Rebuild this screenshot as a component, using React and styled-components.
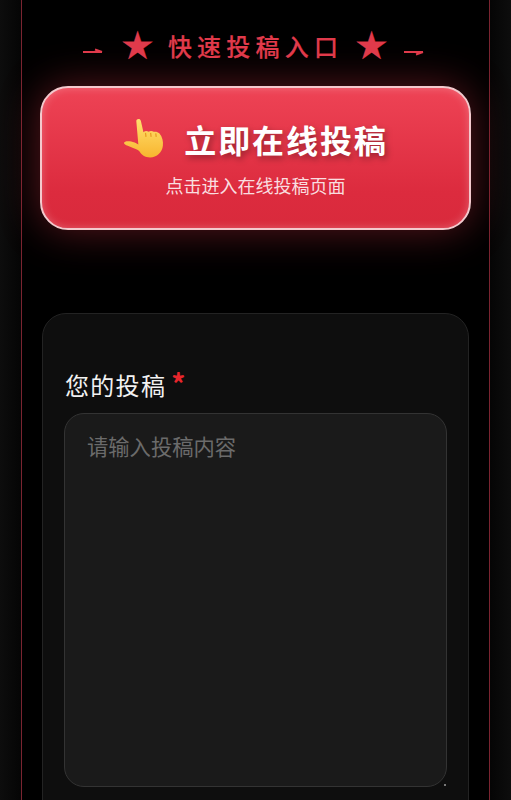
import React from 'react'
import styled, { createGlobalStyle } from 'styled-components';

const GlobalStyle = createGlobalStyle`
html, body {
  margin: 0;
  padding: 0;
  background: #000;
  height: 800px;
  overflow: hidden;
}
body {
  font-family: "Noto Sans CJK SC", "Noto Sans", "Liberation Sans", sans-serif;
}
`;

const Page = styled.div`
width: 511px;
height: 800px;
display: flex;
justify-content: center;
overflow: hidden;
background: linear-gradient(90deg, #0d0d0d 0, #050505 21px, #000 22px, #000 489px, #050505 490px, #0d0d0d 511px);
`;

const Column = styled.div`
width: 469px;
height: 800px;
box-sizing: border-box;
flex-shrink: 0;
background: #000;
border-left: 1px solid #7a2430;
border-right: 1px solid #7a2430;
padding: 30px 18px 0;
`;

const Heading = styled.div`
height: 32px;
padding-right: 4px;
display: flex;
align-items: center;
justify-content: center;
color: #e03a4b;
font-size: 24px;
line-height: 32px;
letter-spacing: 5.2px;
font-weight: 500;
-webkit-text-stroke: 0.15px #e03a4b;
white-space: nowrap;
`;

const Star = styled.span`
font-family: "DejaVu Sans", sans-serif;
font-size: 39px;
font-weight: 400;
letter-spacing: 0;
margin: 0 ${(props) => props.$gap}px 0 ${(props) => props.$lead}px;
`;

const Dash = styled.svg`
width: 22px;
height: 10px;
margin-top: 9px;
flex-shrink: 0;
`;

const BigButton = styled.button`
display: flex;
flex-direction: column;
align-items: center;
width: 431px;
height: 144px;
box-sizing: border-box;
margin: 24px 0 0;
padding: 27px 0 0;
border: 2px solid #f3c9cd;
border-radius: 28px;
background: linear-gradient(180deg, #ee4355 0%, #dc2b3e 75%, #d92a3c 100%);
box-shadow: 0 0 40px rgba(220, 53, 69, 0.42), inset 0 0 8px rgba(255, 255, 255, 0.25);
font-family: inherit;
`;

const ButtonTitle = styled.div`
display: flex;
align-items: center;
color: #fff;
font-size: 32px;
line-height: 48px;
font-weight: 700;
letter-spacing: 1.9px;
text-shadow: 2px 3px 6px rgba(0, 0, 0, 0.35);
`;

const Hand = styled.svg`
width: 45px;
height: 45px;
margin-right: 16px;
`;

const ButtonSub = styled.div`
color: rgba(255, 255, 255, 0.85);
font-size: 18px;
line-height: 26px;
margin-top: 9px;
`;

const Card = styled.form`
width: 427px;
height: 600px;
box-sizing: border-box;
margin: 83px 0 0 2px;
padding: 51px 21px 0;
background: #0e0e0e;
border: 1px solid #232323;
border-radius: 24px;
`;

const Label = styled.label`
display: flex;
padding-left: 1px;
color: #f2f2f2;
font-size: 24px;
line-height: 40px;
letter-spacing: 1.3px;
`;

const Required = styled.span`
color: #e8262c;
margin-left: 5px;
margin-top: -2px;
font-size: 28px;
font-weight: 700;
`;

const Field = styled.div`
position: relative;
width: 383px;
margin-top: 8px;
&::after {
  content: "";
  position: absolute;
  right: 1px;
  bottom: 1px;
  width: 2px;
  height: 2px;
  background: #777;
}
`;

const TextArea = styled.textarea`
display: block;
width: 383px;
height: 374px;
box-sizing: border-box;
padding: 16px 22px;
background: #1a1a1a;
border: 1px solid #333;
border-radius: 20px;
color: #fff;
font-family: inherit;
font-size: 21.3px;
line-height: 32px;
outline: none;
resize: none;
&::placeholder {
  color: #6b6b6b;
}
`;

function App() {
    return (
        <Page>
            <GlobalStyle/>
            <Column>
                <Heading>
                    <Dash viewBox="0 0 22 10"><path d="M1 6h19M13 3.500l7 2.500" stroke="#e03a4b" strokeWidth="2" fill="none"/></Dash>
                    <Star $lead={16} $gap={13}>★</Star>
                    快速投稿入口
                    <Star $lead={11} $gap={14}>★</Star>
                    <Dash viewBox="0 0 22 10"><path d="M1 6h19M13 8.500l7-2.500" stroke="#e03a4b" strokeWidth="2" fill="none"/></Dash>
                </Heading>
                <BigButton type="button">
                    <ButtonTitle>
                        <Hand viewBox="0 0 44 44">
                            <defs>
                                <linearGradient id="skin" x1="0" y1="0" x2="0" y2="1">
                                    <stop offset="0" stopColor="#ffe06e"/>
                                    <stop offset="1" stopColor="#f8b52f"/>
                                </linearGradient>
                            </defs>
                            <path d="M13 4c0-2.500 4-3 4.500 0l2.500 11c1.500-1.500 3.500-1.500 5-.5 1.500-1 3.500-1 5 0 2-.5 4 0 5.500 1.500 3 3.500 4 8 3.500 12-.5 6-6 11.500-12.500 11.500-5 0-8.500-2.500-10.500-6-1.500-2-5-2.500-9-4.500C4 28 1 27 1 25.500c0-2 4-2 7-1.500 2 .3 5 1.500 7 3L13 4z" fill="url(#skin)"/>
                            <path d="M22 15.500l.5 4M27 15.500l.5 4M32 16l.5 3.500" stroke="#e89a20" strokeWidth="1.200" fill="none"/>
                        </Hand>
                        立即在线投稿
                    </ButtonTitle>
                    <ButtonSub>点击进入在线投稿页面</ButtonSub>
                </BigButton>
                <Card>
                    <Label>您的投稿<Required>*</Required></Label>
                    <Field>
                        <TextArea placeholder="请输入投稿内容"/>
                    </Field>
                </Card>
            </Column>
        </Page>
    )
}

export default App
